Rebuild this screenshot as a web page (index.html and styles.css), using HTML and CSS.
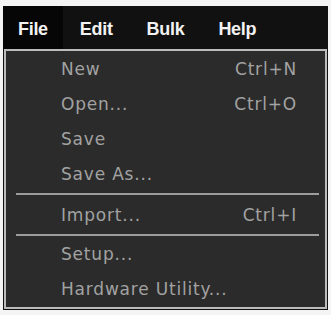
FILE: index.html
```html
<!DOCTYPE html>
<html>
<head>
<meta charset="utf-8">
<link rel="stylesheet" href="styles.css">
</head>
<body>
<div class="app">
  <div class="menubar">
    <span class="top active">File</span>
    <span class="top">Edit</span>
    <span class="top">Bulk</span>
    <span class="top">Help</span>
  </div>
  <div class="panel">
    <div class="item"><span>New</span><span>Ctrl+N</span></div>
    <div class="item"><span>Open...</span><span>Ctrl+O</span></div>
    <div class="item"><span>Save</span></div>
    <div class="item"><span>Save As...</span></div>
    <div class="sep"></div>
    <div class="item"><span>Import...</span><span>Ctrl+I</span></div>
    <div class="sep sep2"></div>
    <div class="item"><span>Setup...</span></div>
    <div class="item"><span>Hardware Utility...</span></div>
  </div>
</div>
</body>
</html>
```
FILE: styles.css
```css
html, body {
  margin: 0;
  padding: 0;
  background: #f4f4f4;
}
.app {
  margin: 6px 0 0 3px;
  width: 325px;
  background: #101010;
  padding-bottom: 1px;
}
.menubar {
  display: flex;
  height: 43px;
  align-items: center;
  background: #111111;
  font-family: "Liberation Sans", Arial, sans-serif;
  font-weight: bold;
  font-size: 18px;
  letter-spacing: -0.3px;
  color: #f2f2f2;
}
.top {
  height: 100%;
  display: flex;
  align-items: center;
  padding: 4px 17px 0 17px;
  box-sizing: border-box;
}
.top.active {
  background: #060606;
  padding-left: 15px;
  padding-right: 15px;
}
.panel {
  margin: 0 1px 0 1px;
  border: 2px solid #bcbcbc;
  background: #2b2b2b;
  padding: 0 0 1px 0;
  font-family: "DejaVu Sans", Verdana, sans-serif;
  font-size: 17px;
  letter-spacing: 0.8px;
  color: #a2a2a2;
}
.item {
  height: 35px;
  display: flex;
  align-items: center;
  justify-content: space-between;
  padding: 0 28px 0 55px;
}
.sep {
  height: 2px;
  background: #9c9c9c;
  margin: 2px 6px 2px 10px;
}
.sep2 {
  margin-bottom: 0;
}
```
